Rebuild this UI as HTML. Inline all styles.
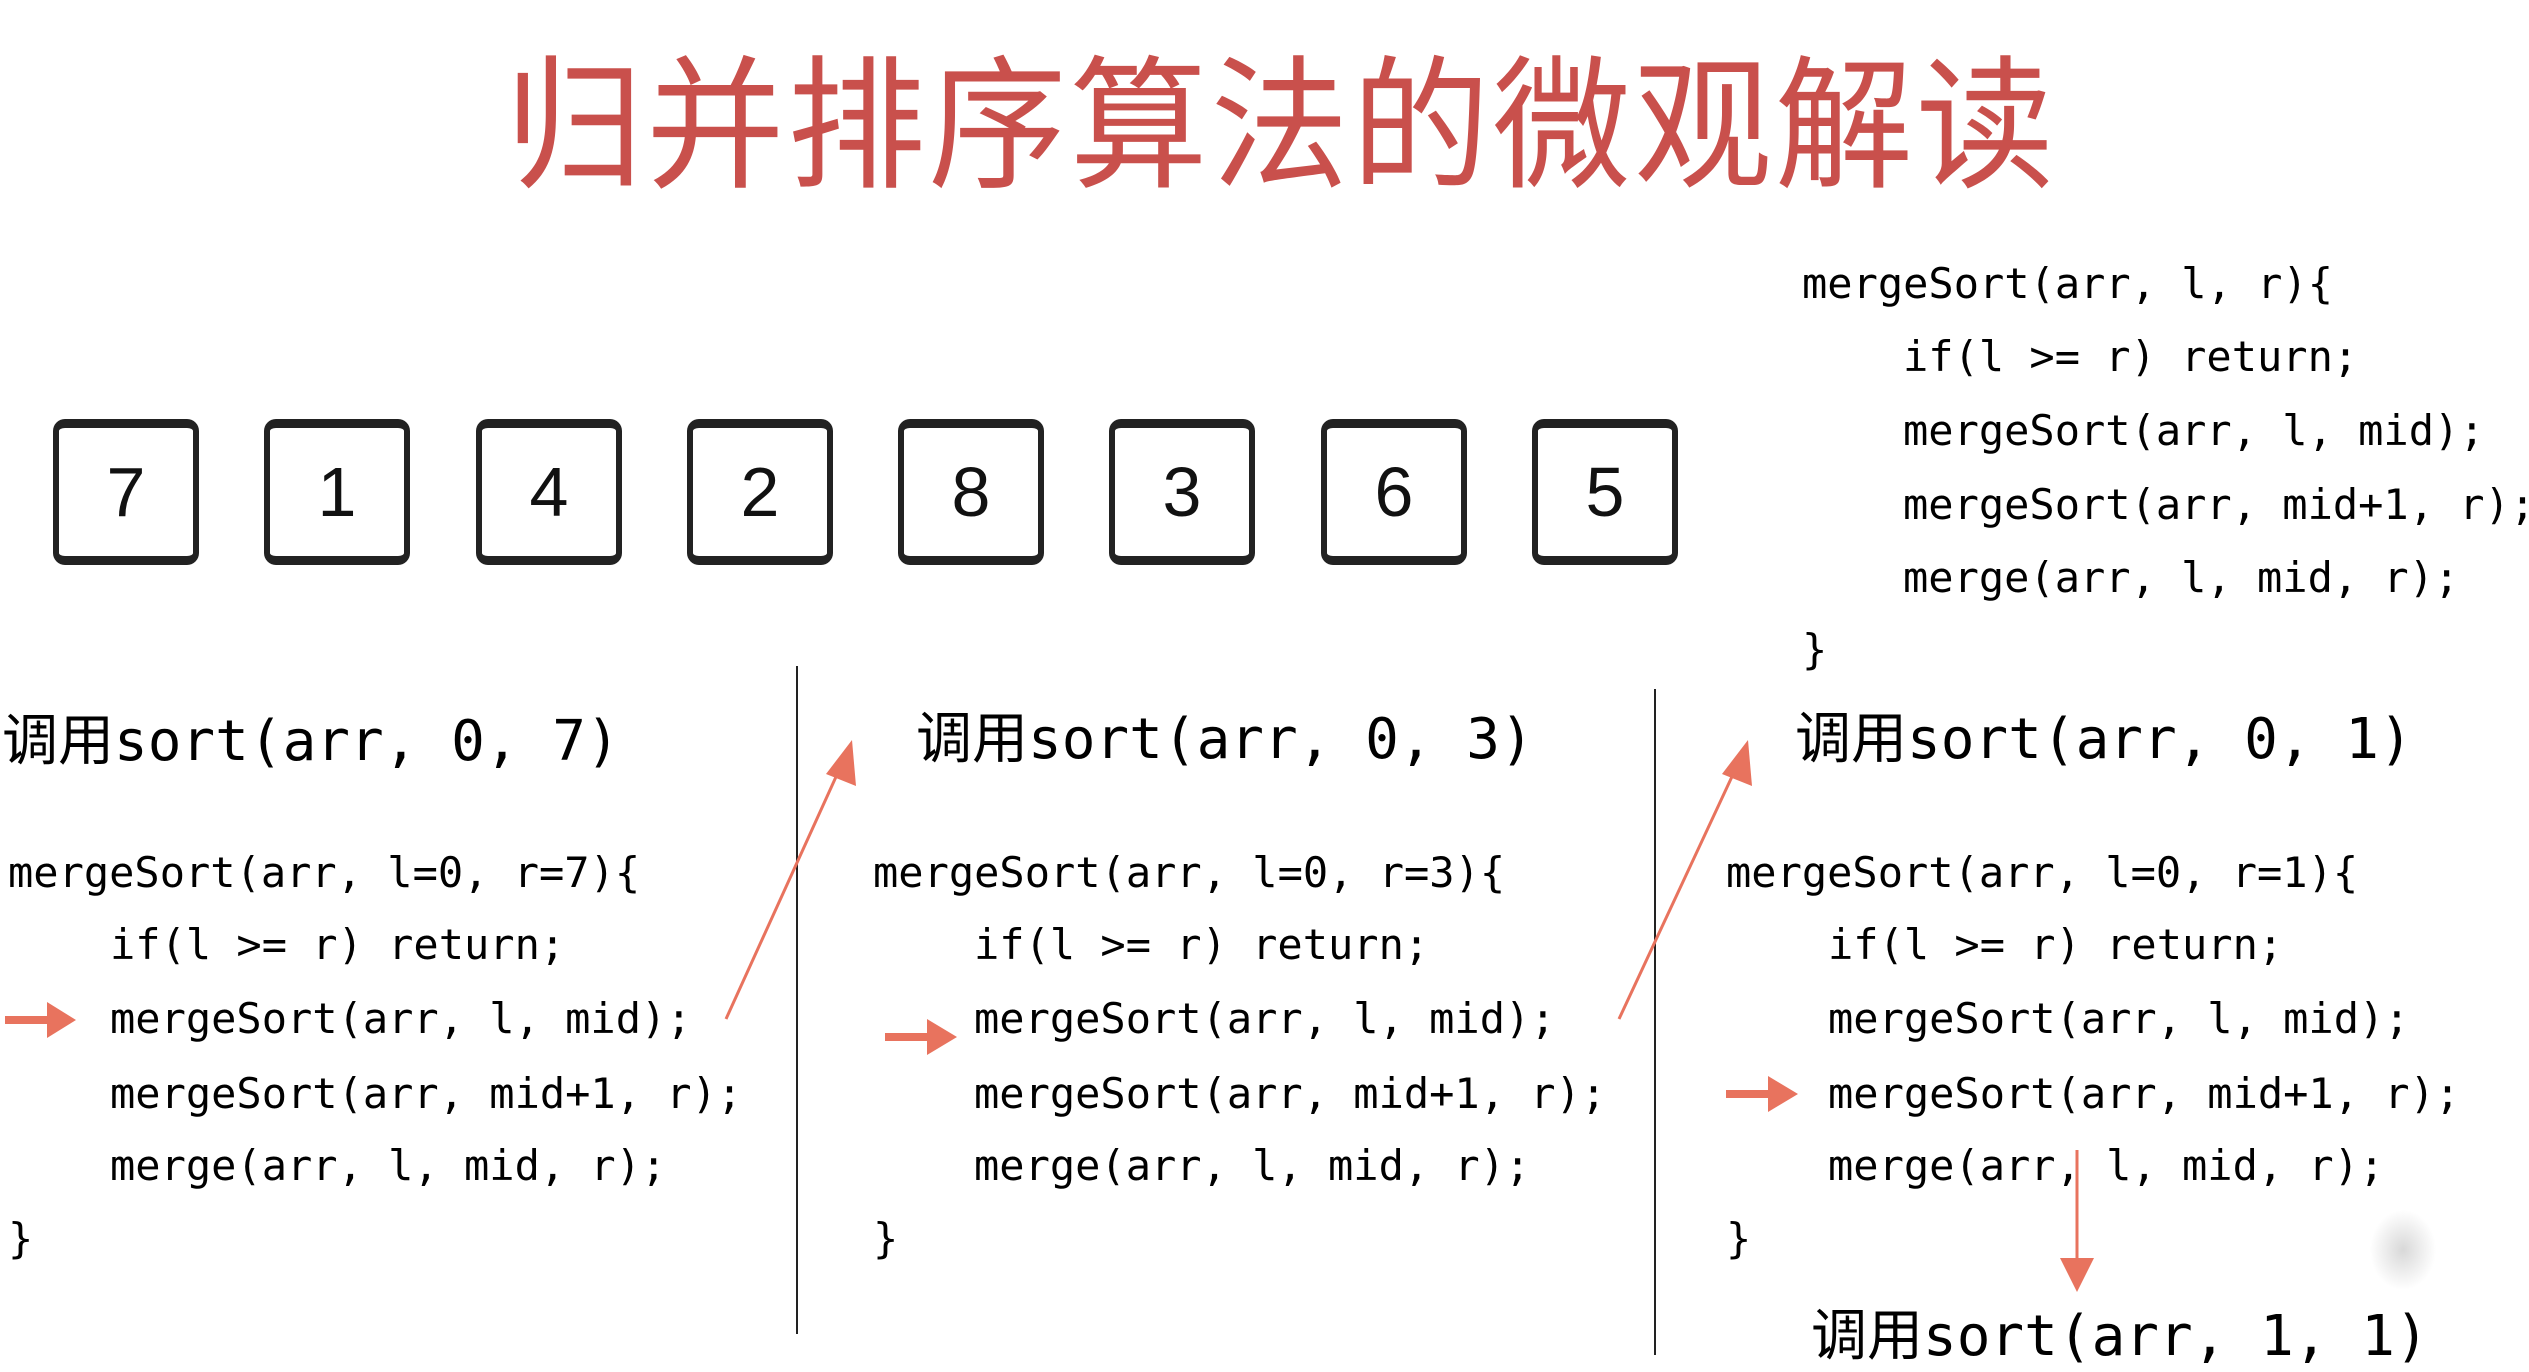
<!DOCTYPE html>
<html><head><meta charset="utf-8">
<style>
html,body{margin:0;padding:0;background:#fff;}
body{width:2529px;height:1368px;position:relative;overflow:hidden;}
.t{position:absolute;white-space:pre;color:#000;}
.title{position:absolute;left:0;top:38px;width:2562px;text-align:center;white-space:nowrap;font-family:"Noto Sans CJK SC","WenQuanYi Zen Hei",sans-serif;font-size:150px;line-height:160px;color:#c9504c;letter-spacing:3px;transform:scale(0.922,0.96);transform-origin:50% 0;}
.box{position:absolute;top:419px;width:134px;height:128px;border:6px solid #222;border-top-width:9px;border-bottom-width:9px;border-radius:12px;font-family:"Liberation Sans",sans-serif;font-size:70px;line-height:128px;text-align:center;color:#111;}
.code{font-family:"DejaVu Sans Mono","Liberation Mono",monospace;font-size:42px;line-height:50px;}
.h{font-family:"DejaVu Sans Mono","Noto Sans CJK SC",monospace;font-size:56px;line-height:70px;}
.h span{font-family:"Noto Sans CJK SC",sans-serif;}
</style></head><body>
<div class="title">归并排序算法的微观解读</div>

<div class="box" style="left:53px">7</div>
<div class="box" style="left:264px">1</div>
<div class="box" style="left:476px">4</div>
<div class="box" style="left:687px">2</div>
<div class="box" style="left:898px">8</div>
<div class="box" style="left:1109px">3</div>
<div class="box" style="left:1321px">6</div>
<div class="box" style="left:1532px">5</div>

<div class="t code" style="left:1802px;top:259px">mergeSort(arr, l, r){</div>
<div class="t code" style="left:1903px;top:332px">if(l >= r) return;</div>
<div class="t code" style="left:1903px;top:406px">mergeSort(arr, l, mid);</div>
<div class="t code" style="left:1903px;top:480px">mergeSort(arr, mid+1, r);</div>
<div class="t code" style="left:1903px;top:553px">merge(arr, l, mid, r);</div>
<div class="t code" style="left:1802px;top:625px">}</div>

<div class="t h" style="left:2px;top:702px"><span>调用</span>sort(arr, 0, 7)</div>
<div class="t h" style="left:916px;top:700px"><span>调用</span>sort(arr, 0, 3)</div>
<div class="t h" style="left:1795px;top:700px"><span>调用</span>sort(arr, 0, 1)</div>
<div class="t h" style="left:1811px;top:1297px"><span>调用</span>sort(arr, 1, 1)</div>

<div class="t code" style="left:8px;top:848px">mergeSort(arr, l=0, r=7){</div>
<div class="t code" style="left:110px;top:920px">if(l >= r) return;</div>
<div class="t code" style="left:110px;top:994px">mergeSort(arr, l, mid);</div>
<div class="t code" style="left:110px;top:1069px">mergeSort(arr, mid+1, r);</div>
<div class="t code" style="left:110px;top:1141px">merge(arr, l, mid, r);</div>
<div class="t code" style="left:8px;top:1214px">}</div>

<div class="t code" style="left:873px;top:848px">mergeSort(arr, l=0, r=3){</div>
<div class="t code" style="left:974px;top:920px">if(l >= r) return;</div>
<div class="t code" style="left:974px;top:994px">mergeSort(arr, l, mid);</div>
<div class="t code" style="left:974px;top:1069px">mergeSort(arr, mid+1, r);</div>
<div class="t code" style="left:974px;top:1141px">merge(arr, l, mid, r);</div>
<div class="t code" style="left:873px;top:1214px">}</div>

<div class="t code" style="left:1726px;top:848px">mergeSort(arr, l=0, r=1){</div>
<div class="t code" style="left:1828px;top:920px">if(l >= r) return;</div>
<div class="t code" style="left:1828px;top:994px">mergeSort(arr, l, mid);</div>
<div class="t code" style="left:1828px;top:1069px">mergeSort(arr, mid+1, r);</div>
<div class="t code" style="left:1828px;top:1141px">merge(arr, l, mid, r);</div>
<div class="t code" style="left:1726px;top:1214px">}</div>

<div style="position:absolute;left:2370px;top:1210px;width:66px;height:80px;border-radius:50%;background:radial-gradient(closest-side,#d8d8d8,rgba(255,255,255,0));"></div>

<svg width="2529" height="1368" style="position:absolute;left:0;top:0" xmlns="http://www.w3.org/2000/svg">
<line x1="797" y1="666" x2="797" y2="1334" stroke="#222" stroke-width="2"/>
<line x1="1655" y1="689" x2="1655" y2="1355" stroke="#222" stroke-width="2"/>
<g fill="#e8735e" stroke="#e8735e">
<line x1="5" y1="1020" x2="52" y2="1020" stroke-width="8"/>
<polygon points="47,1002 76,1020 47,1038" stroke="none"/>
<line x1="885" y1="1037" x2="932" y2="1037" stroke-width="8"/>
<polygon points="927,1019 957,1037 927,1055" stroke="none"/>
<line x1="1726" y1="1094" x2="1773" y2="1094" stroke-width="8"/>
<polygon points="1768,1076 1798,1094 1768,1112" stroke="none"/>
<line x1="726" y1="1019" x2="840" y2="768" stroke-width="3"/>
<polygon points="852,740 856,786 826,774" stroke="none"/>
<line x1="1619" y1="1019" x2="1736" y2="768" stroke-width="3"/>
<polygon points="1748,740 1752,786 1722,774" stroke="none"/>
<line x1="2077" y1="1150" x2="2077" y2="1262" stroke-width="3"/>
<polygon points="2060,1258 2094,1258 2077,1292" stroke="none"/>
</g>
</svg>
</body></html>
